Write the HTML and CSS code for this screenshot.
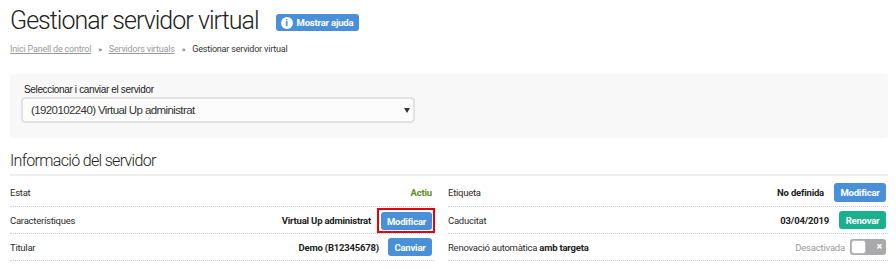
FILE: index.html
```html
<!DOCTYPE html>
<html lang="ca">
<head>
<meta charset="utf-8">
<title>Gestionar servidor virtual</title>
<link rel="stylesheet" href="styles.css">
</head>
<body>
<div class="page">
  <div class="title-row">
    <h1 class="title">Gestionar servidor virtual</h1>
    <button class="help-btn"><span class="info-icon">i</span>Mostrar ajuda</button>
  </div>
  <nav class="crumbs">
    <a href="#">Inici Panell de control</a>
    <span class="sep">»</span>
    <a href="#">Servidors virtuals</a>
    <span class="sep">»</span>
    <span class="current">Gestionar servidor virtual</span>
  </nav>
  <div class="panel">
    <div class="panel-label">Seleccionar i canviar el servidor</div>
    <div class="select">
      <span class="select-text">(1920102240) Virtual Up administrat</span>
      <span class="select-arrow"></span>
    </div>
  </div>
  <h2 class="section-title">Informació del servidor</h2>
  <div class="info-grid">
    <div class="col">
      <div class="row">
        <span class="label">Estat</span>
        <span class="value ok">Actiu</span>
      </div>
      <div class="row">
        <span class="label">Característiques</span>
        <span class="value">Virtual Up administrat</span>
        <span class="highlight"><button class="btn blue w-mod">Modificar</button></span>
      </div>
      <div class="row">
        <span class="label">Titular</span>
        <span class="value">Demo (B12345678)</span>
        <button class="btn blue w-canv">Canviar</button>
      </div>
    </div>
    <div class="col">
      <div class="row">
        <span class="label">Etiqueta</span>
        <span class="value">No definida</span>
        <button class="btn blue w-mod2">Modificar</button>
      </div>
      <div class="row">
        <span class="label">Caducitat</span>
        <span class="value">03/04/2019</span>
        <button class="btn green w-ren">Renovar</button>
      </div>
      <div class="row">
        <span class="label">Renovació automàtica <b>amb targeta</b></span>
        <span class="value muted">Desactivada</span>
        <span class="toggle"><span class="knob"></span><span class="x">×</span></span>
      </div>
    </div>
  </div>
</div>
</body>
</html>
```
FILE: styles.css
```css
* { box-sizing: border-box; }
html, body { margin: 0; padding: 0; background: #fff; }
body { font-family: Roboto, "Liberation Sans", Arial, sans-serif; color: #333; }
.page { width: 878px; margin-left: 10px; }

.title-row { display: flex; align-items: flex-start; margin-top: 5px; }
.title { margin: 0; font-weight: 300; font-size: 25px; line-height: 32px; color: #222; letter-spacing: -0.97px; }
.help-btn {
  margin: 9px 0 0 17px; height: 17px; padding: 0 6px 0 5px;
  display: flex; align-items: center; gap: 4px;
  background: #4a90d9; border: 0; border-radius: 3px; color: #fff;
  font-family: Roboto, sans-serif; font-weight: 700; font-size: 9.5px; letter-spacing: -0.2px; line-height: 17px;
}
.info-icon {
  width: 12px; height: 12px; border-radius: 50%; background: #fff; color: #4a90d9;
  font-size: 9px; font-weight: 900; line-height: 12px; text-align: center; letter-spacing: 0;
  font-family: "DejaVu Sans", sans-serif;
}

.crumbs { margin-top: 5px; font-size: 9px; letter-spacing: -0.2px; line-height: 14px; color: #333; }
.crumbs a { color: #999; text-decoration: underline; }
.crumbs .sep { color: #555; margin: 0 5px; font-size: 8px; }

.panel {
  margin-top: 17px; height: 64px; background: #f8f8f8; border-radius: 4px;
  padding: 9px 0 0 11px;
}
.panel-label { padding-left: 3px; font-family: "Liberation Sans", Arial, sans-serif; font-size: 10px; letter-spacing: -0.35px; line-height: 13px; color: #222; }
.select {
  margin-top: 1px; width: 394px; height: 26px; border: 2px solid #e2e2e2; border-radius: 4px;
  background: #fcfcfc; display: flex; align-items: center; justify-content: space-between;
  padding: 0 3px 0 8px;
}
.select-text { font-family: "Liberation Sans", Arial, sans-serif; font-size: 11.5px; letter-spacing: -0.6px; color: #333; }
.select-arrow { width: 0; height: 0; border-left: 3px solid transparent; border-right: 3px solid transparent; border-top: 5px solid #333; }

.section-title {
  margin: 13px 0 0; font-weight: 300; font-size: 16px; letter-spacing: -0.68px; line-height: 20px; color: #222;
  padding-bottom: 3px; border-bottom: 2px solid #eee;
}

.info-grid { display: grid; grid-template-columns: 424px 440px; column-gap: 14px; margin-top: 3px; }
.row {
  height: 27px; border-bottom: 1px dotted #ccc; display: flex; align-items: center;
  padding-right: 2px; font-size: 9.5px; letter-spacing: -0.25px; color: #2b2b2b;
}
.row:first-child { height: 28px; }
.label { flex: 1; }
.label b { font-weight: 700; color: #222; letter-spacing: -0.2px; }
.value { font-weight: 700; color: #222; letter-spacing: -0.2px; }
.value.ok { color: #5c8e1e; }
.value.muted { font-weight: 400; color: #999; }

.btn {
  margin-left: 10px; height: 19px; border: 0; border-radius: 3px; color: #fff;
  font-family: Roboto, sans-serif; font-weight: 700; font-size: 9.5px; letter-spacing: -0.2px; padding: 0;
}
.blue { background: #4a90d9; }
.green { background: #1ab08e; }
.w-mod { width: 51px; height: 18px; margin-left: 0; display: block; }
.w-mod2 { width: 52px; }
.w-canv { width: 44px; margin-left: 9px; height: 18px; }
.w-ren { width: 47px; height: 18px; }
.highlight {
  margin: 1px -3px 0 6px; border: 2px solid #e8000b; padding: 2px 1px 1px 2px;
}

.toggle {
  margin-left: 5px; width: 36px; height: 16px; border-radius: 3px; background: #a9a9a9;
  display: flex; align-items: center; justify-content: space-between; padding: 1px 4px 1px 1px;
}
.knob { width: 15px; height: 14px; background: #fff; border-radius: 3px; border: 1px solid #bbb; }
.x { color: #fff; font-weight: 700; font-size: 11px; line-height: 14px; }
```
